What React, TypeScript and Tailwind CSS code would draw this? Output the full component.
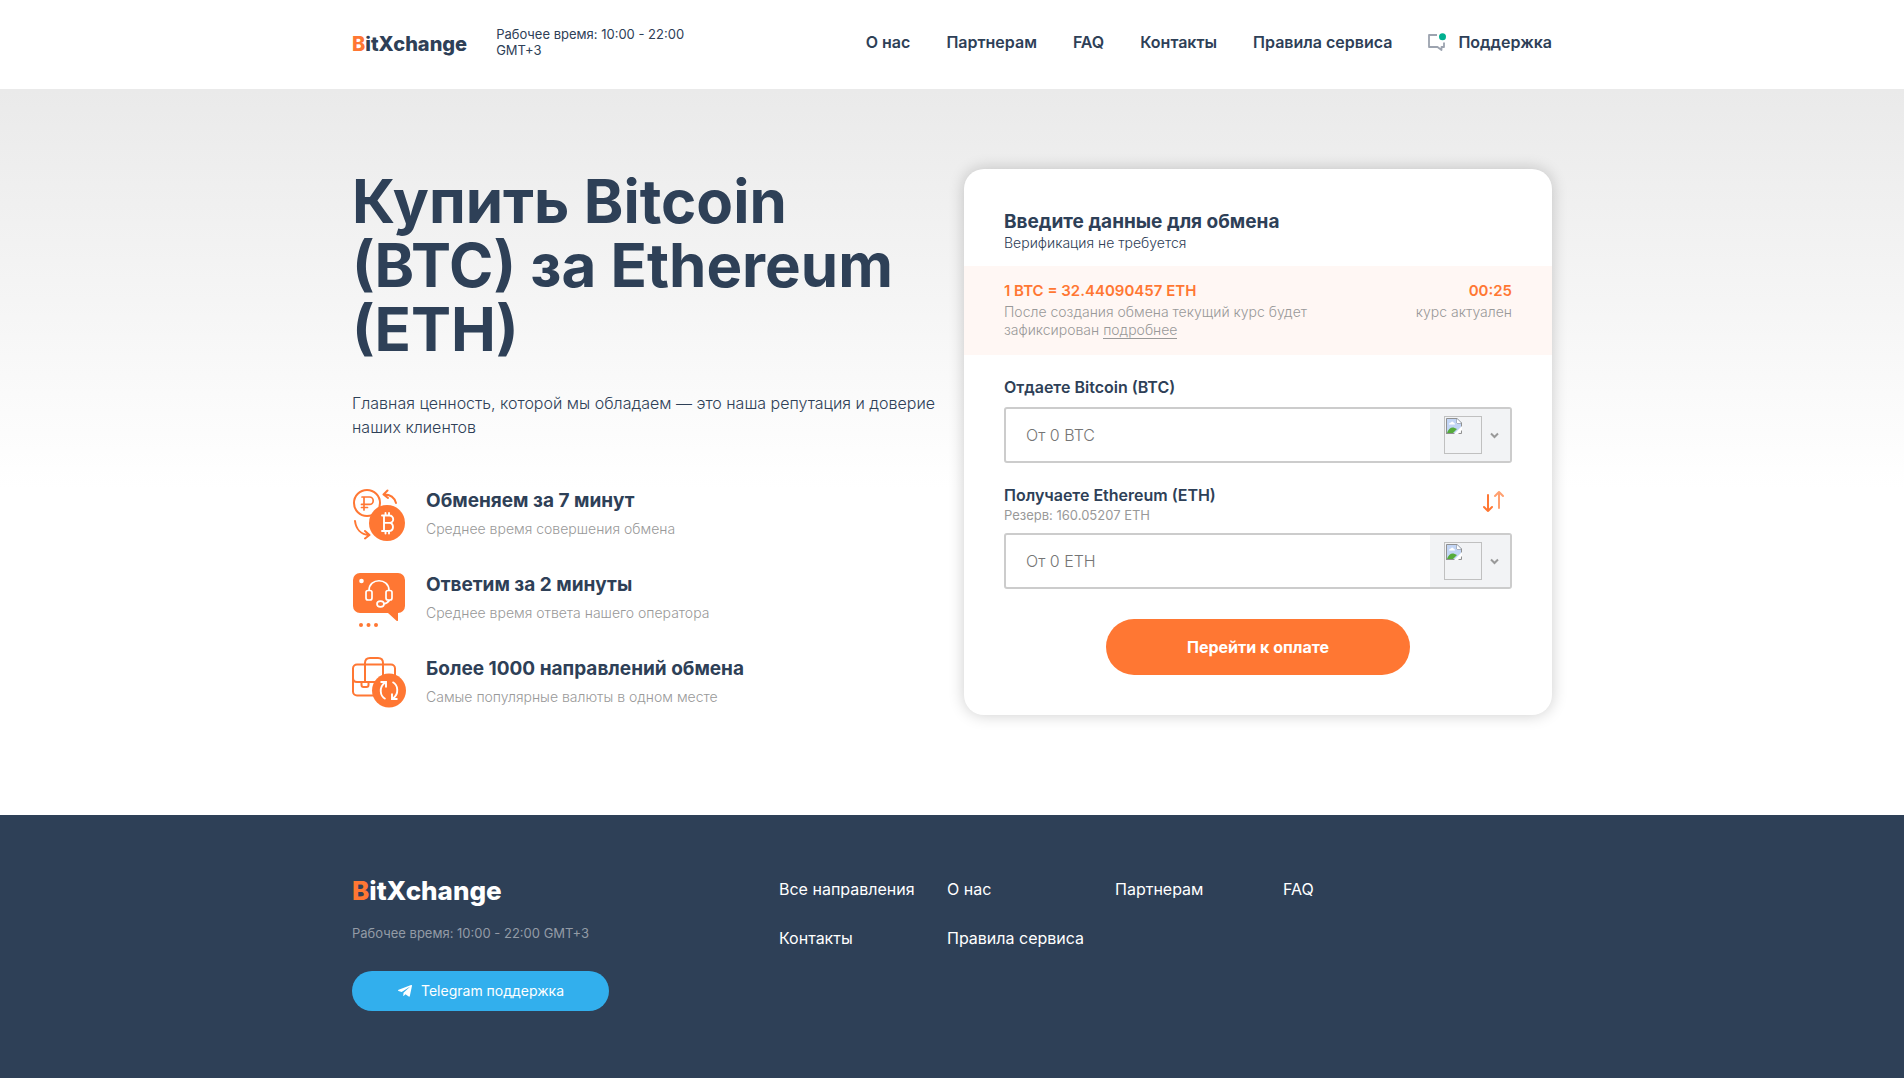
import { FaTelegramPlane } from 'react-icons/fa';

const navLinks = ['О нас', 'Партнерам', 'FAQ', 'Контакты', 'Правила сервиса'];
const footerLinks = ['Все направления', 'О нас', 'Партнерам', 'FAQ', 'Контакты', 'Правила сервиса'];

const features = [
  { title: 'Обменяем за 7 минут', text: 'Среднее время совершения обмена', icon: <CoinsIcon /> },
  { title: 'Ответим за 2 минуты', text: 'Среднее время ответа нашего оператора', icon: <OperatorIcon /> },
  { title: 'Более 1000 направлений обмена', text: 'Самые популярные валюты в одном месте', icon: <BriefcaseIcon /> },
];

function CoinsIcon() {
  return (
    <svg width="54" height="54" viewBox="0 0 54 54" fill="none" stroke="#ff7733" strokeWidth="2" strokeLinecap="round" strokeLinejoin="round" aria-hidden="true">
      <circle cx="15" cy="14" r="13" />
      <path d="M12 21V8h5.5a3.7 3.7 0 0 1 0 7.400H9.500M9.500 18.500h6M10 8h2" strokeWidth="1.700" />
      <path d="M32 5.500c6 0 10.500 3 12 8.500M35.500 1.500l-4 4 4.500 3.500M3 32c1 8 6 13.500 14 14M13 42l4.500 4-4.500 3.500" />
      <circle cx="35" cy="34" r="18" fill="#ff7733" stroke="none" />
      <path d="M30 26.500h7.500a3.700 3.700 0 0 1 0 7.400H32m5.500 0a4.100 4.100 0 0 1 0 8.100H30M32 26.500V42M33.500 24v2.500M37 24v2.500M33.500 42v2.500M37 42v2.500" stroke="#fff" strokeWidth="1.900" />
    </svg>
  );
}

function OperatorIcon() {
  return (
    <svg width="54" height="56" viewBox="0 0 54 56" fill="none" aria-hidden="true">
      <path d="M8 0h38a7 7 0 0 1 7 7v26a7 7 0 0 1-7 7v7.500q-.5 1-1.500.3L36 40H8a7 7 0 0 1-7-7V7a7 7 0 0 1 7-7z" fill="#ff7733" />
      <circle cx="9.500" cy="8" r="2.300" fill="#fff" />
      <g stroke="#fff" strokeWidth="1.700">
        <path d="M17 17.500C17 4.500 37 4.500 37 17.500M37.500 27c-1 2-3.500 3.500-6 4" />
        <rect x="14" y="17.500" width="6" height="9.500" rx="2" />
        <rect x="34" y="17.500" width="6" height="9.500" rx="2" />
        <ellipse cx="28.500" cy="31" rx="3.500" ry="2.800" />
      </g>
      <g fill="#ff7733">
        <circle cx="9" cy="52" r="2" />
        <circle cx="16.500" cy="52" r="2" />
        <circle cx="24" cy="52" r="2" />
      </g>
    </svg>
  );
}

function BriefcaseIcon() {
  return (
    <svg width="54" height="52" viewBox="0 0 54 52" fill="none" stroke="#ff7733" strokeWidth="2" aria-hidden="true">
      <rect x="1" y="7.500" width="42" height="31" rx="4" />
      <path d="M13 25V6q0-5 5-5h8q5 0 5 5v17M1 21q0 4 4 4h18M9.500 25v3q0 2 2 2h3q2 0 2-2v-3" />
      <circle cx="37" cy="33.500" r="17" fill="#ff7733" stroke="none" />
      <path d="M33.500 42c-6-3-6.500-12-.5-16.500M28.500 25h5.500v5.500M40.500 25c6 3 6.500 12 .5 16.500M45.500 42H40v-5.500" stroke="#fff" strokeWidth="1.900" />
    </svg>
  );
}

function SupportIcon() {
  return (
    <svg width="18" height="18" viewBox="0 0 18 18" fill="none" aria-hidden="true">
      <path d="M9 2H1v12h8.500l4 3v-3H16V9.500" stroke="#9ca3af" strokeWidth="1.800" strokeLinejoin="round" />
      <circle cx="14.500" cy="3.700" r="3.500" fill="#00b090" />
    </svg>
  );
}

function MissingImage() {
  return (
    <span className="block size-[38px] border border-[#c0c0c0] p-px">
      <svg width="16" height="16" viewBox="0 0 16 16" aria-hidden="true">
        <path d="M0 0h11l5 5v5l-6 6H0z" fill="#c2d5f5" />
        <path d="M.5 16V.5H11L15.500 5v4M11 .5V5h4.500M.5 15.500H9M15.500 12v3.500H12" fill="none" stroke="#909090" />
        <path d="M11 1v4h4z" fill="#fff" />
        <path d="M3 6.500Q3 4.500 5 4.500q1-2 2.500 0Q9 5 9 6.500z" fill="#fff" />
        <path d="M1 15c1-4 4-6 6.500-5.500L11 11l-4 4z" fill="#55ab3b" />
        <path d="M16 8L8 16h4l4-4z" fill="#fff" />
      </svg>
    </span>
  );
}

function Logo({ className }: { className: string }) {
  return (
    <a href="#" className={`font-extrabold ${className}`}>
      <span className="text-[#ff7733]">B</span>itXchange
    </a>
  );
}

function AmountField({ id, coin }: { id: string; coin: string }) {
  return (
    <div className="flex h-14 rounded-[3px] border-2 border-[#cccccc]">
      <input id={id} type="text" placeholder={`От 0 ${coin}`} className="min-w-0 flex-1 px-5 text-base font-light outline-none placeholder:text-[#757575]" />
      <button type="button" aria-label={`Валюта ${coin}`} className="flex w-20 items-center gap-2 bg-[#f2f3f5] pl-[14px]">
        <MissingImage />
        <svg width="9" height="7" viewBox="0 0 9 7" fill="none" stroke="#999" strokeWidth="2" aria-hidden="true">
          <path d="M1 1.500l3.500 3.500L8 1.500" />
        </svg>
      </button>
    </div>
  );
}

function ExchangeForm() {
  return (
    <form className="rounded-[20px] bg-white pt-10 pb-10 shadow-[0_0_16px_rgba(0,0,0,0.2)]">
      <div className="px-10">
        <h2 className="text-[19px] leading-[26px] font-bold">Введите данные для обмена</h2>
        <p className="text-sm leading-4 font-light">Верификация не требуется</p>
      </div>

      <div className="mt-[15px] flex justify-between bg-[#fff7f4] px-10 pt-3 pb-4 text-sm leading-[18px] font-light text-[#999]">
        <div className="w-[320px]">
          <p className="text-[15px] leading-[25px] font-semibold text-[#ff7733]">1 BTC = 32.44090457 ETH</p>
          <p>
            После создания обмена текущий курс будет зафиксирован{' '}
            <a href="#" className="border-b border-[#999]">подробнее</a>
          </p>
        </div>
        <div className="text-right">
          <p className="text-[15px] leading-[25px] font-semibold text-[#ff7733]">00:25</p>
          <p>курс актуален</p>
        </div>
      </div>

      <div className="px-10 pt-5">
        <label htmlFor="give" className="mb-2 block text-base leading-6 font-semibold">Отдаете Bitcoin (BTC)</label>
        <AmountField id="give" coin="BTC" />

        <div className="mt-5 mb-2 flex items-start justify-between">
          <div>
            <label htmlFor="get" className="block text-base leading-6 font-semibold">Получаете Ethereum (ETH)</label>
            <p className="mb-0.5 text-[13px] leading-4 text-[#999]">Резерв: 160.05207 ETH</p>
          </div>
          <button type="button" aria-label="Поменять местами" className="mt-2 mr-2">
            <svg width="21" height="21" viewBox="0 0 21 21" fill="none" stroke="#ff7733" strokeWidth="2" strokeLinecap="round" strokeLinejoin="round">
              <path d="M5 4v16M1 16l4 4 4-4" />
              <path d="M16 17V1M12 5l4-4 4 4" opacity="0.700" />
            </svg>
          </button>
        </div>
        <AmountField id="get" coin="ETH" />

        <button type="submit" className="mx-auto mt-[30px] block h-14 w-3/5 rounded-full bg-[#ff7733] text-base font-bold text-white">Перейти к оплате</button>
      </div>
    </form>
  );
}

export default function App() {
  return (
    <div className="flex min-h-screen flex-col bg-white font-[Inter,'Open_Sans',sans-serif] text-[#2e4057]">
      <header className="pt-[26px] pb-[31px]">
        <div className="mx-auto flex max-w-[1200px] items-center">
          <Logo className="pt-1 text-xl leading-7" />
          <p className="ml-[29px] w-[200px] text-[13px] leading-4">Рабочее время: 10:00 - 22:00 GMT+3</p>
          <nav className="ml-auto flex items-center gap-9 text-base font-semibold">
            {navLinks.map((link) => (
              <a key={link} href="#">{link}</a>
            ))}
            <a href="#" className="flex items-center gap-3">
              <SupportIcon />
              Поддержка
            </a>
          </nav>
        </div>
      </header>

      <main className="bg-linear-to-b from-[#eaeaea] to-white to-55% pt-20 pb-[100px]">
        <div className="mx-auto grid max-w-[1200px] grid-cols-2 items-start gap-6">
          <section>
            <h1 className="text-6xl leading-16 font-bold">Купить Bitcoin (BTC) за Ethereum (ETH)</h1>
            <p className="mt-[30px] text-base leading-6 font-light">Главная ценность, которой мы обладаем — это наша репутация и доверие наших клиентов</p>
            <ul className="mt-[50px] flex flex-col gap-7">
              {features.map((item) => (
                <li key={item.title} className="flex h-14 gap-5">
                  <div className="w-[54px]">{item.icon}</div>
                  <div>
                    <h3 className="text-[19px] leading-6 font-bold">{item.title}</h3>
                    <p className="mt-2 text-sm leading-4 font-light text-[#999]">{item.text}</p>
                  </div>
                </li>
              ))}
            </ul>
          </section>
          <ExchangeForm />
        </div>
      </main>

      <footer className="flex-1 bg-[#2e4057] pt-[60px] pb-[67px] text-white">
        <div className="mx-auto flex max-w-[1200px]">
          <div className="w-[427px]">
            <Logo className="block text-[26px] leading-8" />
            <p className="mt-4 text-[13px] leading-5 text-[#939ba6]">Рабочее время: 10:00 - 22:00 GMT+3</p>
            <a href="#" className="mt-7 flex h-10 w-[257px] items-center justify-center gap-2 rounded-full bg-[#32afed] text-sm">
              <FaTelegramPlane size={16} />
              Telegram поддержка
            </a>
          </div>
          <nav className="grid auto-rows-min grid-cols-[repeat(4,168px)] gap-y-[25px] pt-0.5 text-base leading-6">
            {footerLinks.map((link) => (
              <a key={link} href="#">{link}</a>
            ))}
          </nav>
        </div>
      </footer>
    </div>
  );
}
